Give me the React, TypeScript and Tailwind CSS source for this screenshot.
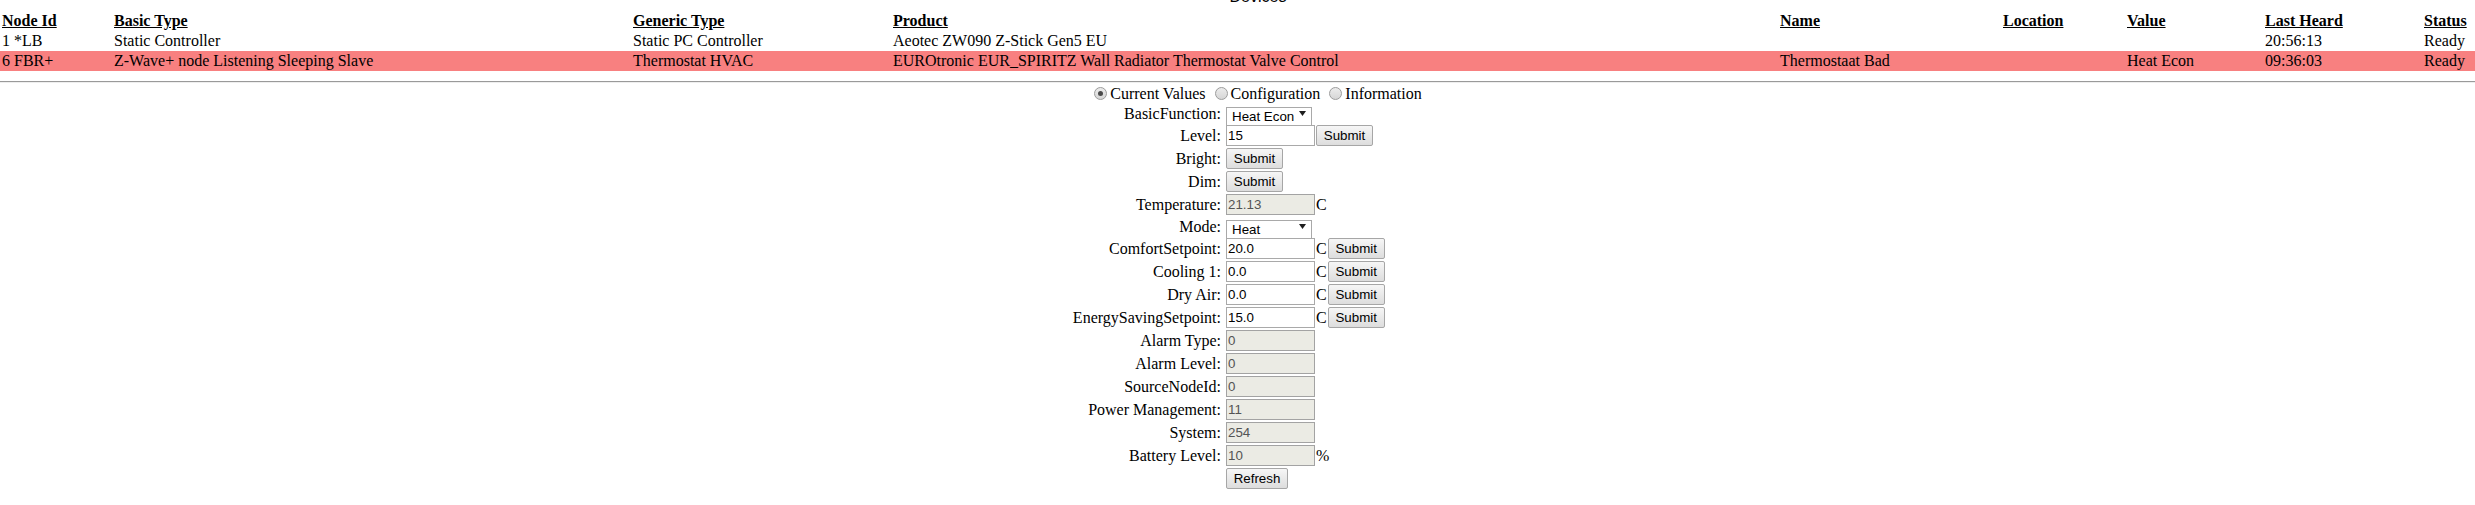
import { ChangeEvent, useState } from 'react';

type Device = {
  id: string;
  basic: string;
  generic: string;
  product: string;
  name: string;
  location: string;
  value: string;
  heard: string;
  status: string;
  selected?: boolean;
};

const devices: Device[] = [
  {
    id: '1 *LB',
    basic: 'Static Controller',
    generic: 'Static PC Controller',
    product: 'Aeotec ZW090 Z-Stick Gen5 EU',
    name: '',
    location: '',
    value: '',
    heard: '20:56:13',
    status: 'Ready',
  },
  {
    id: '6 FBR+',
    basic: 'Z-Wave+ node Listening Sleeping Slave',
    generic: 'Thermostat HVAC',
    product: 'EUROtronic EUR_SPIRITZ Wall Radiator Thermostat Valve Control',
    name: 'Thermostaat Bad',
    location: '',
    value: 'Heat Econ',
    heard: '09:36:03',
    status: 'Ready',
    selected: true,
  },
];

const headers = ['Node Id', 'Basic Type', 'Generic Type', 'Product', 'Name', 'Location', 'Value', 'Last Heard', 'Status'];
const colWidths = [112, 519, 260, 887, 223, 124, 138, 159, 53];

type Field = {
  label: string;
  kind: 'select' | 'input' | 'readonly' | 'button';
  value?: string;
  options?: string[];
  unit?: string;
  submit?: boolean;
  buttonText?: string;
};

const fields: Field[] = [
  { label: 'BasicFunction:', kind: 'select', value: 'Heat Econ', options: ['Heat', 'Heat Econ', 'Cool', 'Off'] },
  { label: 'Level:', kind: 'input', value: '15', submit: true },
  { label: 'Bright:', kind: 'button' },
  { label: 'Dim:', kind: 'button' },
  { label: 'Temperature:', kind: 'readonly', value: '21.13', unit: 'C' },
  { label: 'Mode:', kind: 'select', value: 'Heat', options: ['Off', 'Heat', 'Cool', 'Auto'] },
  { label: 'ComfortSetpoint:', kind: 'input', value: '20.0', unit: 'C', submit: true },
  { label: 'Cooling 1:', kind: 'input', value: '0.0', unit: 'C', submit: true },
  { label: 'Dry Air:', kind: 'input', value: '0.0', unit: 'C', submit: true },
  { label: 'EnergySavingSetpoint:', kind: 'input', value: '15.0', unit: 'C', submit: true },
  { label: 'Alarm Type:', kind: 'readonly', value: '0' },
  { label: 'Alarm Level:', kind: 'readonly', value: '0' },
  { label: 'SourceNodeId:', kind: 'readonly', value: '0' },
  { label: 'Power Management:', kind: 'readonly', value: '11' },
  { label: 'System:', kind: 'readonly', value: '254' },
  { label: 'Battery Level:', kind: 'readonly', value: '10', unit: '%' },
  { label: '', kind: 'button', buttonText: 'Refresh' },
];

function Btn({ text = 'Submit' }: { text?: string }) {
  return (
    <button
      className={`${text === 'Refresh' ? 'w-[62px]' : 'w-[57px]'} h-[21px] border border-[#a6a6a6] rounded-[2px] bg-linear-to-b from-[#f6f6f6] to-[#dddddd] text-[13.33px] leading-[15px] font-['Liberation_Sans',Arial,sans-serif] text-black`}
    >
      {text}
    </button>
  );
}

function Select({ initial, options }: { initial: string; options: string[] }) {
  const [val, setVal] = useState(initial);
  return (
    <div className="relative w-[86px] h-[19px]">
      <select
        value={val}
        onChange={(e: ChangeEvent<HTMLSelectElement>) => setVal(e.target.value)}
        className="appearance-none w-[86px] h-[19px] border border-[#a9a9a9] bg-white pl-[5px] text-[13.33px] leading-[15px] font-['Liberation_Sans',Arial,sans-serif] text-black outline-none"
      >
        {options.map((o) => (
          <option key={o}>{o}</option>
        ))}
      </select>
      <svg className="absolute right-[6px] top-[7px] pointer-events-none" width="7" height="5" viewBox="0 0 7 5">
        <path d="M0 0H7L3.5 5Z" fill="#1e1e1e" />
      </svg>
    </div>
  );
}

function Radio({ label, checked }: { label: string; checked?: boolean }) {
  return (
    <label className="flex items-center mr-[4px]">
      <span className="ml-[5px] mr-[3px] w-[13px] h-[13px] rounded-full border border-[#9c9c9c] bg-linear-to-b from-[#ececec] to-[#d6d6d6] flex items-center justify-center">
        {checked && <span className="w-[5px] h-[5px] rounded-full bg-[#4a4a4a]" />}
      </span>
      <span>{label}</span>
    </label>
  );
}

function FieldRow({ f }: { f: Field }) {
  const h = f.kind === 'select' ? 'h-[21px]' : 'h-[23px]';
  return (
    <div className={`flex items-center ${h}`}>
      <div className="w-[152px] pr-[1px] text-right leading-[18px]">{f.label}</div>
      <div className="flex items-center pl-[4px]">
        {f.kind === 'select' && <Select initial={f.value ?? ''} options={f.options ?? []} />}
        {f.kind === 'input' && (
          <input
            defaultValue={f.value}
            className="w-[89px] h-[21px] border border-[#a9a9a9] bg-white pl-[1px] text-[13.33px] font-['Liberation_Sans',Arial,sans-serif] text-black outline-none"
          />
        )}
        {f.kind === 'readonly' && (
          <input
            value={f.value}
            disabled
            readOnly
            className="w-[89px] h-[21px] border border-[#a3a3a3] bg-[#ebebe4] pl-[1px] text-[13.33px] font-['Liberation_Sans',Arial,sans-serif] text-[#545454]"
          />
        )}
        {f.kind === 'button' && <Btn text={f.buttonText} />}
        {f.unit && <span className="leading-[18px] pl-[1px]">{f.unit}</span>}
        {f.submit && (
          <span className="pl-[1px] flex">
            <Btn />
          </span>
        )}
      </div>
    </div>
  );
}

export default function App() {
  return (
    <div className="w-[2475px] h-[505px] overflow-hidden bg-white text-black text-[16px] font-['Liberation_Serif','Times_New_Roman',serif]">
      {/* caption, mostly scrolled off the top */}
      <div className="flex justify-center pl-[41px] -mt-[12px] h-[18px] leading-[18px] font-['Liberation_Sans',Arial,sans-serif]">
        Devices
      </div>

      <table className="mt-[5px] w-full table-fixed border-collapse">
        <colgroup>
          {colWidths.map((w, i) => (
            <col key={i} style={{ width: w }} />
          ))}
        </colgroup>
        <thead>
          <tr>
            {headers.map((h) => (
              <th key={h} className="pl-[2px] py-px leading-[18px] text-left font-bold underline whitespace-nowrap">
                {h}
              </th>
            ))}
          </tr>
        </thead>
        <tbody>
          {devices.map((d) => (
            <tr key={d.id} className={d.selected ? 'bg-[#f88080]' : ''}>
              {[d.id, d.basic, d.generic, d.product, d.name, d.location, d.value, d.heard, d.status].map((c, i) => (
                <td key={i} className="pl-[2px] py-px leading-[18px] whitespace-nowrap">
                  {c}
                </td>
              ))}
            </tr>
          ))}
        </tbody>
      </table>

      <hr className="mt-[10px] h-0 border-t border-b border-t-[#9a9a9a] border-b-[#eeeeee]" />

      <div className="mt-[1px] h-[19px] flex items-center justify-center pl-[40px] leading-[18px]">
        <Radio label="Current Values" checked />
        <Radio label="Configuration" />
        <Radio label="Information" />
      </div>

      <div className="flex justify-center pr-[20px]">
        <div className="w-[315px] flex flex-col">
          {fields.map((f, i) => (
            <FieldRow key={i} f={f} />
          ))}
        </div>
      </div>
    </div>
  );
}
